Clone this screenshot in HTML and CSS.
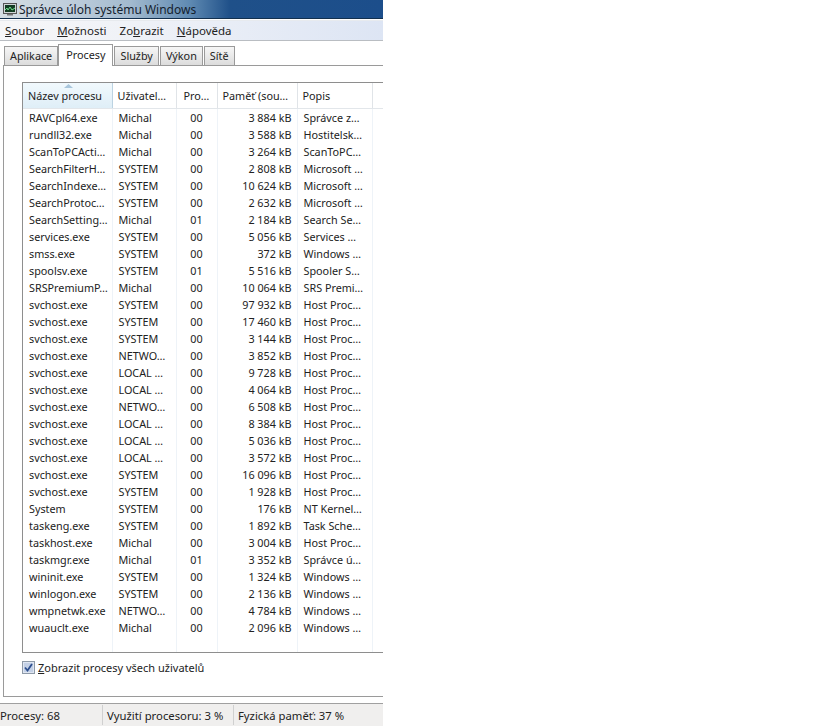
FILE: index.html
```html
<!DOCTYPE html>
<html lang="cs">
<head>
<meta charset="utf-8">
<title>Správce úloh systému Windows</title>
<link rel="stylesheet" href="styles.css">
</head>
<body>
<div class="window">
  <header class="titlebar">
    <svg class="appicon" width="14" height="14" viewBox="0 0 14 14"><rect x="0.5" y="1.5" width="13" height="10" fill="#cfd6d6" stroke="#555"/><rect x="2" y="3" width="10" height="7" fill="#123c22"/><path d="M2 8l2-2 1 2 2-3 2 3 3-2" fill="none" stroke="#6fe08a"/><rect x="4" y="12" width="6" height="1.5" fill="#777"/></svg>
    <span class="titletext">Správce úloh systému Windows</span>
  </header>
  <nav class="menubar">
    <span class="menuitem"><u>S</u>oubor</span>
    <span class="menuitem"><u>M</u>ožnosti</span>
    <span class="menuitem">Zo<u>b</u>razit</span>
    <span class="menuitem"><u>N</u>ápověda</span>
  </nav>
  <div class="tabs">
    <span class="tab">Aplikace</span>
    <span class="tab active">Procesy</span>
    <span class="tab">Služby</span>
    <span class="tab">Výkon</span>
    <span class="tab">Sítě</span>
  </div>
  <section class="panel">
    <div class="listbox">
      <table class="grid">
        <colgroup><col class="c1"><col class="c2"><col class="c3"><col class="c4"><col class="c5"><col class="c6"></colgroup>
        <thead>
          <tr>
            <th class="sorted"><svg class="sortarrow" width="9" height="4" viewBox="0 0 9 4"><path d="M4.5 0L9 4H0z" fill="#a9c6dc"/></svg>Název procesu</th>
            <th>Uživatel…</th><th class="center">Pro…</th><th>Paměť (sou…</th><th>Popis</th><th></th>
          </tr>
        </thead>
        <tbody>
          <tr><td>RAVCpl64.exe</td><td>Michal</td><td class="center">00</td><td class="num">3 884 kB</td><td>Správce z…</td><td></td></tr>
          <tr><td>rundll32.exe</td><td>Michal</td><td class="center">00</td><td class="num">3 588 kB</td><td>Hostitelsk…</td><td></td></tr>
          <tr><td>ScanToPCActi…</td><td>Michal</td><td class="center">00</td><td class="num">3 264 kB</td><td>ScanToPC…</td><td></td></tr>
          <tr><td>SearchFilterH…</td><td>SYSTEM</td><td class="center">00</td><td class="num">2 808 kB</td><td>Microsoft …</td><td></td></tr>
          <tr><td>SearchIndexe…</td><td>SYSTEM</td><td class="center">00</td><td class="num">10 624 kB</td><td>Microsoft …</td><td></td></tr>
          <tr><td>SearchProtoc…</td><td>SYSTEM</td><td class="center">00</td><td class="num">2 632 kB</td><td>Microsoft …</td><td></td></tr>
          <tr><td>SearchSetting…</td><td>Michal</td><td class="center">01</td><td class="num">2 184 kB</td><td>Search Se…</td><td></td></tr>
          <tr><td>services.exe</td><td>SYSTEM</td><td class="center">00</td><td class="num">5 056 kB</td><td>Services …</td><td></td></tr>
          <tr><td>smss.exe</td><td>SYSTEM</td><td class="center">00</td><td class="num">372 kB</td><td>Windows …</td><td></td></tr>
          <tr><td>spoolsv.exe</td><td>SYSTEM</td><td class="center">01</td><td class="num">5 516 kB</td><td>Spooler S…</td><td></td></tr>
          <tr><td>SRSPremiumP…</td><td>Michal</td><td class="center">00</td><td class="num">10 064 kB</td><td>SRS Premi…</td><td></td></tr>
          <tr><td>svchost.exe</td><td>SYSTEM</td><td class="center">00</td><td class="num">97 932 kB</td><td>Host Proc…</td><td></td></tr>
          <tr><td>svchost.exe</td><td>SYSTEM</td><td class="center">00</td><td class="num">17 460 kB</td><td>Host Proc…</td><td></td></tr>
          <tr><td>svchost.exe</td><td>SYSTEM</td><td class="center">00</td><td class="num">3 144 kB</td><td>Host Proc…</td><td></td></tr>
          <tr><td>svchost.exe</td><td>NETWO…</td><td class="center">00</td><td class="num">3 852 kB</td><td>Host Proc…</td><td></td></tr>
          <tr><td>svchost.exe</td><td>LOCAL …</td><td class="center">00</td><td class="num">9 728 kB</td><td>Host Proc…</td><td></td></tr>
          <tr><td>svchost.exe</td><td>LOCAL …</td><td class="center">00</td><td class="num">4 064 kB</td><td>Host Proc…</td><td></td></tr>
          <tr><td>svchost.exe</td><td>NETWO…</td><td class="center">00</td><td class="num">6 508 kB</td><td>Host Proc…</td><td></td></tr>
          <tr><td>svchost.exe</td><td>LOCAL …</td><td class="center">00</td><td class="num">8 384 kB</td><td>Host Proc…</td><td></td></tr>
          <tr><td>svchost.exe</td><td>LOCAL …</td><td class="center">00</td><td class="num">5 036 kB</td><td>Host Proc…</td><td></td></tr>
          <tr><td>svchost.exe</td><td>LOCAL …</td><td class="center">00</td><td class="num">3 572 kB</td><td>Host Proc…</td><td></td></tr>
          <tr><td>svchost.exe</td><td>SYSTEM</td><td class="center">00</td><td class="num">16 096 kB</td><td>Host Proc…</td><td></td></tr>
          <tr><td>svchost.exe</td><td>SYSTEM</td><td class="center">00</td><td class="num">1 928 kB</td><td>Host Proc…</td><td></td></tr>
          <tr><td>System</td><td>SYSTEM</td><td class="center">00</td><td class="num">176 kB</td><td>NT Kernel…</td><td></td></tr>
          <tr><td>taskeng.exe</td><td>SYSTEM</td><td class="center">00</td><td class="num">1 892 kB</td><td>Task Sche…</td><td></td></tr>
          <tr><td>taskhost.exe</td><td>Michal</td><td class="center">00</td><td class="num">3 004 kB</td><td>Host Proc…</td><td></td></tr>
          <tr><td>taskmgr.exe</td><td>Michal</td><td class="center">01</td><td class="num">3 352 kB</td><td>Správce ú…</td><td></td></tr>
          <tr><td>wininit.exe</td><td>SYSTEM</td><td class="center">00</td><td class="num">1 324 kB</td><td>Windows …</td><td></td></tr>
          <tr><td>winlogon.exe</td><td>SYSTEM</td><td class="center">00</td><td class="num">2 136 kB</td><td>Windows …</td><td></td></tr>
          <tr><td>wmpnetwk.exe</td><td>NETWO…</td><td class="center">00</td><td class="num">4 784 kB</td><td>Windows …</td><td></td></tr>
          <tr><td>wuauclt.exe</td><td>Michal</td><td class="center">00</td><td class="num">2 096 kB</td><td>Windows …</td><td></td></tr>
          <tr class="filler"><td></td><td></td><td></td><td></td><td></td><td></td></tr>
        </tbody>
      </table>
    </div>
    <label class="showall">
      <svg class="checkbox" width="13" height="13" viewBox="0 0 13 13"><rect x="0.5" y="0.5" width="12" height="12" fill="#dfe6f2" stroke="#8e9aa8"/><rect x="2" y="2" width="9" height="9" fill="#c3d0e6"/><path d="M3 6.5l2.5 3L10 3" fill="none" stroke="#2d4f8f" stroke-width="1.8"/></svg>
      <span><u>Z</u>obrazit procesy všech uživatelů</span>
    </label>
  </section>
  <footer class="statusbar">
    <span class="cell first">Procesy: 68</span>
    <span class="cell second">Využití procesoru: 3 %</span>
    <span class="cell third">Fyzická paměť: 37 %</span>
  </footer>
</div>
</body>
</html>
```
FILE: styles.css
```css
html, body { margin: 0; padding: 0; background: #fff; }
body { height: 726px; overflow: hidden; font-family: "Noto Sans", "Liberation Sans", sans-serif; font-size: 10.8px; color: #222; }
.window { width: 383px; height: 726px; display: flex; flex-direction: column; background: #fff; }
.titlebar { height: 18px; display: flex; align-items: center; gap: 2px; padding-left: 3px; border-bottom: 1px solid #12304f; background: linear-gradient(90deg, #d5dee4 0, #bfcedb 70px, #a3bacf 130px, #5f8ab2 190px, #1f5089 230px, #1c4e8b 100%); flex: none; }
.appicon { flex: none; }
.titletext { font-size: 12px; color: #14212e; }
.menubar { margin-top: 1px; height: 19px; display: flex; gap: 13px; align-items: center; padding-left: 5px; font-size: 11.5px; border-top: 1px solid #e7eaee; border-bottom: 1px solid #b9bdc2; background: linear-gradient(90deg, #f7f7f8 0, #eef1f7 150px, #dde5f4 100%); flex: none; }
.tabs { display: flex; align-items: flex-end; height: 24px; padding-left: 4px; flex: none; }
.tab { height: 18px; line-height: 18px; padding: 0 5px; margin-right: 1px; border: 1px solid #9a9a9a; border-bottom: 0; background: linear-gradient(#f6f6f6, #dcdcdc); box-sizing: content-box; }
.tab.active { height: 21px; line-height: 19px; padding: 0 7px; margin: 0 1px 0 -1px; background: #fff; position: relative; top: 1px; z-index: 1; }
.panel { width: 380px; margin-left: 3px; height: 632px; box-sizing: border-box; border: 1px solid #9a9a9a; border-right: 0; padding: 16px 0 0 18px; background: #fff; flex: none; }
.listbox { height: 571px; box-sizing: border-box; border: 1px solid #8e8e8e; border-right: 0; overflow: hidden; }
.grid { width: 360px; height: 100%; table-layout: fixed; border-collapse: collapse; }
.c1 { width: 89px; } .c2 { width: 64px; } .c3 { width: 41px; } .c4 { width: 80px; } .c5 { width: 75px; } .c6 { width: 11px; }
.grid th { height: 25px; padding: 0 5px; text-align: left; font-weight: normal; white-space: nowrap; overflow: hidden; background: #fff; border-right: 1px solid #e0e4e8; border-bottom: 1px solid #e2e6ea; position: relative; }
.grid th.sorted { background: linear-gradient(#f1f9fd, #dfeef7); border-right: 1px solid #bcd3e2; }
.grid th.center, .grid td.center { text-align: center; }
.sortarrow { position: absolute; left: 41px; top: 1px; }
.grid td { height: 17px; padding: 0 6px; white-space: nowrap; overflow: hidden; border-right: 1px solid #eef3f8; line-height: 17px; }
.grid td.num { text-align: right; padding-right: 5px; }
.filler td { height: auto; }
.showall { display: flex; align-items: center; gap: 3px; margin-top: 5px; height: 18px; font-size: 11px; }
.checkbox { flex: none; }
.statusbar { margin-top: 6px; height: 23px; box-sizing: border-box; border-top: 1px solid #a0a0a0; display: flex; align-items: center; background: #f0efee; flex: none; }
.cell { height: 20px; line-height: 22px; box-sizing: border-box; border-right: 1px solid #d0d0d0; font-size: 11.3px; white-space: nowrap; }
.cell.first { width: 103px; }
.cell.second { width: 131px; padding-left: 4px; }
.cell.third { padding-left: 4px; border-right: 0; }
```
